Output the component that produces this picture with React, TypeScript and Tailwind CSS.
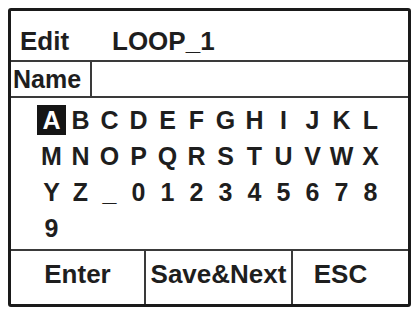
import React from "react";

const chars = [
  ..."ABCDEFGHIJKLMNOPQRSTUVWXYZ".split(""),
  "_",
  ..."0123456789".split(""),
];

export default function App() {
  return (
    <div
      className="w-[415px] h-[310px] bg-white pt-[8px] pl-[8px] text-[#1e1e1e]"
      style={{ fontFamily: '"Liberation Sans", Arial, sans-serif' }}
    >
      <div className="w-[403px] h-[299px] border-[3px] border-[#1a1a1a] rounded-[3px] flex flex-col font-bold">
        <div className="h-[51px] border-b-2 border-[#3a3a3a] flex items-center pt-[10px] pl-[9px] text-[26px] leading-[26px]">
          <span className="w-[92px]">Edit</span>
          <span>LOOP_1</span>
        </div>
        <div className="h-[36px] border-b-2 border-[#3a3a3a] flex">
          <div className="w-[81px] border-r-2 border-[#3a3a3a] flex items-center pl-[2px] text-[25px] leading-[25px]">
            Name
          </div>
          <div className="flex-1" />
        </div>
        <div className="flex-1 pt-[4px] pl-[26px]">
          <div className="grid grid-cols-[repeat(12,29px)] auto-rows-[36px] text-[25px] leading-[36px]">
            {chars.map((c, i) => (
              <div key={i} className="flex items-center justify-center">
                {i === 0 ? (
                  <span className="w-[30px] h-[30px] bg-[#151515] text-white flex items-center justify-center leading-[25px]">
                    {c}
                  </span>
                ) : (
                  <span>{c}</span>
                )}
              </div>
            ))}
          </div>
        </div>
        <div className="h-[55px] border-t-2 border-[#3a3a3a] flex text-[26px] leading-[26px]">
          <div className="w-[133px] flex items-center justify-center pb-[8px]">Enter</div>
          <div className="w-[147px] border-l-2 border-[#3a3a3a] flex items-center justify-center pb-[8px]">
            Save&amp;Next
          </div>
          <div className="flex-1 border-l-2 border-[#3a3a3a] flex items-center justify-center pb-[8px] pr-[20px]">
            ESC
          </div>
        </div>
      </div>
    </div>
  );
}
